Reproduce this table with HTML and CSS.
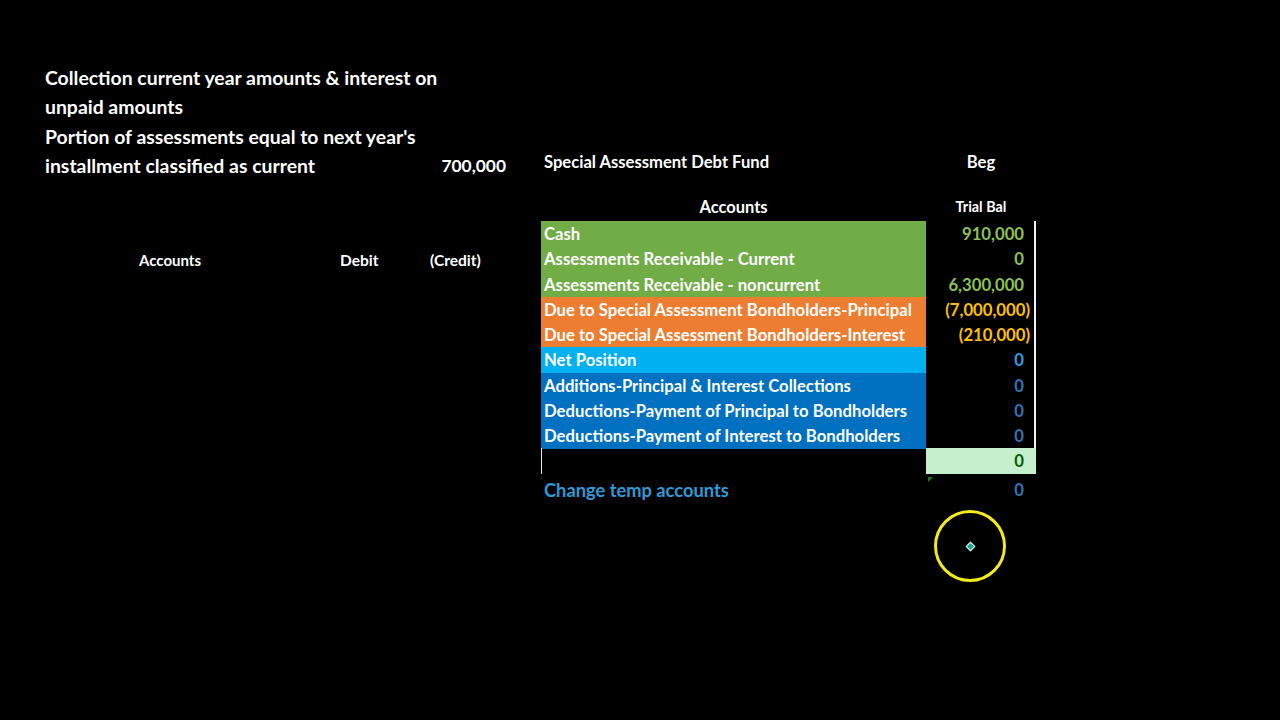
FILE: index.html
```html
<!DOCTYPE html>
<html lang="en">
<head>
<meta charset="utf-8">
<title>Special Assessment Debt Fund</title>
<link rel="stylesheet" href="styles.css">
</head>
<body>
<div class="page">
  <section class="left">
    <div class="notes">
      <div class="note-line">Collection current year amounts &amp; interest on</div>
      <div class="note-line">unpaid amounts</div>
      <div class="note-line">Portion of assessments equal to next year's</div>
      <div class="note-line note-amt"><span>installment classified as current</span><span class="amt">700,000</span></div>
    </div>
    <div class="je-head">
      <span class="je-acc">Accounts</span>
      <span class="je-deb">Debit</span>
      <span class="je-cred">(Credit)</span>
    </div>
  </section>

  <section class="right">
    <div class="fund-title">
      <span class="lab">Special Assessment Debt Fund</span>
      <span class="val">Beg</span>
    </div>
    <div class="tb-head">
      <span class="lab">Accounts</span>
      <span class="val small">Trial Bal</span>
    </div>
    <div class="rows">
      <div class="row green"><span class="lab">Cash</span><span class="val">910,000</span></div>
      <div class="row green"><span class="lab">Assessments Receivable - Current</span><span class="val">0</span></div>
      <div class="row green"><span class="lab">Assessments Receivable - noncurrent</span><span class="val">6,300,000</span></div>
      <div class="row orange"><span class="lab">Due to Special Assessment Bondholders-Principal</span><span class="val neg">(7,000,000)</span></div>
      <div class="row orange"><span class="lab">Due to Special Assessment Bondholders-Interest</span><span class="val neg">(210,000)</span></div>
      <div class="row sky"><span class="lab">Net Position</span><span class="val">0</span></div>
      <div class="row blue"><span class="lab">Additions-Principal &amp; Interest Collections</span><span class="val">0</span></div>
      <div class="row blue"><span class="lab">Deductions-Payment of Principal to Bondholders</span><span class="val">0</span></div>
      <div class="row blue"><span class="lab">Deductions-Payment of Interest to Bondholders</span><span class="val">0</span></div>
      <div class="row total"><span class="lab"></span><span class="val">0</span></div>
    </div>
    <div class="temp">
      <span class="lab">Change temp accounts</span>
      <span class="val"><i class="err-flag"></i>0</span>
    </div>
  </section>
</div>
<div class="cursor-ring"><i class="cursor-dot"></i></div>
</body>
</html>
```
FILE: styles.css
```css
html, body {
  margin: 0;
  padding: 0;
  background: #000;
  width: 1280px;
  height: 720px;
  overflow: hidden;
}
body {
  font-family: Lato, "Liberation Sans", sans-serif;
  font-weight: 700;
  color: #fff;
  position: relative;
}
.page {
  display: flex;
  align-items: flex-start;
}

/* left side */
.left {
  width: 461px;
  padding: 63px 0 0 45px;
  flex: none;
}
.notes {
  font-size: 19.4px;
}
.note-line {
  height: 29.4px;
  line-height: 29.4px;
  white-space: nowrap;
}
.note-amt {
  display: flex;
  justify-content: space-between;
}
.amt { font-size: 17.4px; }
.je-head {
  margin-top: 68px;
  height: 22px;
  line-height: 22px;
  font-size: 15px;
  display: grid;
  grid-template-columns: 295px 90px auto;
}
.je-acc { padding-left: 94px; }
.je-deb { font-size: 15.5px; }
.je-cred { font-size: 15.5px; }

/* right side */
.right {
  margin-left: 35px;
  padding-top: 150px;
  width: 496px;
  flex: none;
}
.fund-title, .tb-head, .row, .temp {
  display: grid;
  grid-template-columns: 385px 110px;
}
.fund-title {
  height: 24px;
  line-height: 24px;
  font-size: 16.6px;
}
.fund-title .lab { padding-left: 3px; }
.fund-title .val { text-align: center; }
.tb-head {
  margin-top: 21px;
  height: 24px;
  line-height: 24px;
  font-size: 16.5px;
}
.tb-head .lab { text-align: center; }
.tb-head .val { text-align: center; }
.small { font-size: 14.4px; }

.rows {
  display: flex;
  flex-direction: column;
  gap: 1px;
  margin-top: 2px;
}
.row {
  height: 24.25px;
  line-height: 26px;
  font-size: 16.7px;
}
.row .lab {
  padding-left: 3px;
  white-space: nowrap;
  overflow: hidden;
}
.row .val {
  text-align: right;
  padding-right: 10px;
  border-right: 2px solid #f2f2f2;
  white-space: nowrap;
}
.row .val.neg { padding-right: 4px; }
.green .lab { background: #70ad47; }
.green .val { color: #8cc255; }
.orange .lab { background: #ed7d31; }
.orange .val { color: #ffc000; }
.sky .lab { background: #00b0f0; }
.sky .val { color: #2c9fe6; }
.blue .lab { background: #0070c0; }
.blue .val { color: #2e75b6; }
.total .lab { border-left: 1px solid #e8e8e8; }
.total .val {
  background: #c6efce;
  color: #006100;
  border-right: none;
  padding-right: 12px;
}

.temp {
  margin-top: 4px;
  height: 26px;
  line-height: 26px;
  font-size: 18.3px;
}
.temp .lab {
  color: #2e9ad8;
  padding-left: 3px;
}
.temp .val {
  color: #2e75b6;
  font-size: 16.7px;
  text-align: right;
  padding-right: 12px;
  position: relative;
}
.err-flag {
  position: absolute;
  left: 2px;
  top: 0;
  width: 0;
  height: 0;
  border-top: 5px solid #1d7a2e;
  border-right: 5px solid transparent;
}

/* cursor highlight overlay */
.cursor-ring {
  position: absolute;
  left: 934px;
  top: 510px;
  width: 66px;
  height: 66px;
  border: 3px solid #f5eb1a;
  border-radius: 50%;
  display: flex;
  align-items: center;
  justify-content: center;
}
.cursor-dot {
  width: 5px;
  height: 5px;
  background: #1fa58a;
  border: 1px solid #e6fff6;
  transform: rotate(45deg);
}
```
